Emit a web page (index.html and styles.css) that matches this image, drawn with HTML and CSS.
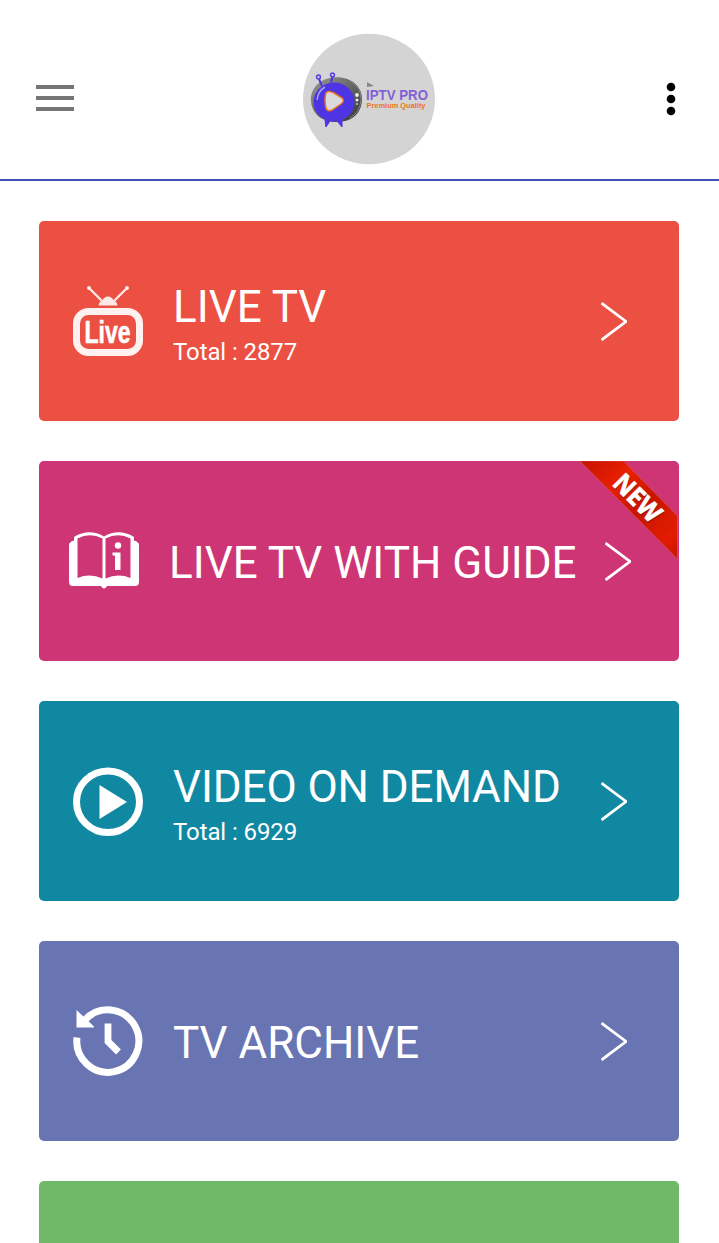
FILE: index.html
```
<!DOCTYPE html>
<html lang="en">
<head>
    <meta charset="UTF-8">
    <meta name="viewport" content="width=device-width, initial-scale=1.0">
    <title>IPTV PRO</title>
    <link rel="stylesheet" href="styles.css">
</head>
<body>
    <header class="header">
        <svg class="menu-icon" viewBox="0 0 38 26">
            <path d="M0 2h38M0 13h38M0 24h38" stroke="#757575" stroke-width="4"/>
        </svg>
        <svg class="logo" viewBox="302 32 134 134">
            <defs>
                <linearGradient id="shell" x1="0" y1="0" x2="1" y2="1">
                    <stop offset="0" stop-color="#999"/>
                    <stop offset="0.5" stop-color="#666"/>
                    <stop offset="1" stop-color="#333"/>
                </linearGradient>
            </defs>
            <ellipse cx="369" cy="99" rx="66" ry="65.3" fill="#d4d4d4"/>
            <path d="M311 101C310 90 319 78 334 77.500C349 76 362 85 362 99C362 113 352 122 337 122C322 122 312 114 311 101Z" fill="url(#shell)"/>
            <path d="M350 81Q362 88 361 100Q360 112 350 118" fill="none" stroke="#888" stroke-width="1"/>
            <path d="M322 86L319 79M331 82L332.500 77" stroke="#4d35e3" stroke-width="2"/>
            <g fill="none" stroke="#5a3fe0" stroke-width="1.500">
                <circle cx="318.500" cy="77" r="1.900"/>
                <circle cx="332.500" cy="75" r="1.900"/>
            </g>
            <path d="M325 120L330 121L326 127ZM337 121L342 120L342 127Z" fill="#4d35e3" stroke="#4d35e3"/>
            <ellipse cx="334" cy="102" rx="20.500" ry="19.500" fill="#4d35e3"/>
            <path d="M317 100Q318 91 325 87" fill="none" stroke="#a99df5" stroke-width="1.500"/>
            <path d="M326 93Q328 90 334 93L342 98Q345 101 341 104L332 110Q327 112 326 108Q324 100 326 93Z" fill="#dcd9dc" stroke="#ee7421" stroke-width="1.500"/>
            <circle cx="357" cy="95" r="1.900" fill="#eee"/>
            <circle cx="357" cy="100" r="1.500" fill="#eee"/>
            <circle cx="357" cy="104" r="1" fill="#ccc"/>
            <path d="M367 82L374 86L367 87Z" fill="#888"/>
            <text class="logo-name" x="366" y="99.500" textLength="62" lengthAdjust="spacingAndGlyphs">IPTV PRO</text>
            <text class="logo-tag" x="366.500" y="107.500" textLength="59" lengthAdjust="spacingAndGlyphs">Premium Quality</text>
        </svg>
        <svg class="more-icon" viewBox="0 0 12 34">
            <circle cx="6" cy="5" r="4.300"/>
            <circle cx="6" cy="17" r="4.300"/>
            <circle cx="6" cy="29" r="4.300"/>
        </svg>
    </header>

    <main class="cards">
        <a class="card card-live">
            <svg class="card-icon" viewBox="0 0 70 70">
                <path d="M16 2L29 15M54 2L41 15" stroke="#ffe9e7" stroke-width="2.400"/>
                <circle cx="16" cy="2" r="2" fill="#ffe9e7"/>
                <circle cx="54" cy="2" r="2" fill="#ffe9e7"/>
                <path d="M25.500 19.500Q26 15.500 29 15Q31 10.500 35 10.500Q39 10.500 41 15Q44 15.500 44.500 19.500Z" fill="#ffe9e7"/>
                <rect x="3.500" y="25.500" width="63" height="41" rx="12" fill="none" stroke="#fff1f0" stroke-width="7"/>
                <text class="live-text" x="11.500" y="57" textLength="46" lengthAdjust="spacingAndGlyphs">Live</text>
            </svg>
            <div class="card-text">
                <div class="card-title">LIVE TV</div>
                <div class="card-total">Total : 2877</div>
            </div>
            <svg class="arrow" viewBox="0 0 26 40"><path d="M0.500 2L25 20.500L0.500 39"/></svg>
        </a>

        <a class="card card-guide">
            <svg class="card-icon" viewBox="0 0 70 70">
                <path d="M0 19Q0 16 5 14.500L5 11Q20 2 35 10.500Q50 2 65 11L65 14.500Q70 16 70 19V56Q70 60 66 60H38Q35 65 32 60H4Q0 60 0 56Z" fill="#fff"/>
                <path d="M8.500 12.500Q21 6 33.500 12.500V52.500Q21 47 8.500 52ZM36.500 12.500Q49 6 61.500 12.500V52Q49 47 36.500 52.500Z" fill="#ce3575"/>
                <circle cx="49" cy="19.500" r="3.200" fill="#fff"/>
                <path d="M43.500 26.500H51.500V44H46V29.500H43.500Z" fill="#fff"/>
            </svg>
            <div class="card-text">
                <div class="card-title">LIVE TV WITH GUIDE</div>
            </div>
            <svg class="arrow" viewBox="0 0 26 40"><path d="M0.500 2L25 20.500L0.500 39"/></svg>
            <svg class="ribbon" viewBox="0 0 98 98">
                <defs>
                    <linearGradient id="ribbonRed" x1="0" y1="0" x2="1" y2="1">
                        <stop offset="0" stop-color="#c41200"/>
                        <stop offset="0.300" stop-color="#e92000"/>
                        <stop offset="0.550" stop-color="#c81500"/>
                        <stop offset="0.850" stop-color="#e21c00"/>
                        <stop offset="1" stop-color="#c61500"/>
                    </linearGradient>
                </defs>
                <path d="M0 0H43.500L97.500 55V98Z" fill="url(#ribbonRed)" stroke="#d8534f" stroke-width="0.700"/>
                <g transform="translate(57.500 37) rotate(45)">
                    <text class="ribbon-shadow" x="1" y="10" textLength="56" lengthAdjust="spacingAndGlyphs">NEW</text>
                    <text class="ribbon-text" x="0" y="9" textLength="56" lengthAdjust="spacingAndGlyphs">NEW</text>
                </g>
            </svg>
        </a>

        <a class="card card-vod">
            <svg class="card-icon" viewBox="0 0 70 70">
                <ellipse cx="35" cy="35.700" rx="31.500" ry="30.800" fill="none" stroke="#fff" stroke-width="7"/>
                <path d="M26.500 19V53L54 36Z" fill="#fff"/>
            </svg>
            <div class="card-text">
                <div class="card-title title-vod">VIDEO ON DEMAND</div>
                <div class="card-total">Total : 6929</div>
            </div>
            <svg class="arrow" viewBox="0 0 26 40"><path d="M0.500 2L25 20.500L0.500 39"/></svg>
        </a>

        <a class="card card-archive">
            <svg class="card-icon" viewBox="0 0 70 70">
                <path d="M11.500 14.500A31 31.200 0 1 1 4 31.500" fill="none" stroke="#fff" stroke-width="7"/>
                <path d="M3.500 4L21 20.500V21.500H3.500Z" fill="#fff"/>
                <path d="M35 17.500V35.500L45.500 46" fill="none" stroke="#fff" stroke-width="6.800"/>
            </svg>
            <div class="card-text">
                <div class="card-title">TV ARCHIVE</div>
            </div>
            <svg class="arrow" viewBox="0 0 26 40"><path d="M0.500 2L25 20.500L0.500 39"/></svg>
        </a>

        <a class="card card-green"></a>
    </main>
</body>
</html>
```
FILE: styles.css
```
* {
    box-sizing: border-box;
}
body {
    margin: 0;
    background-color: #fff;
    font-family: Roboto, sans-serif;
}
.header {
    display: flex;
    align-items: center;
    justify-content: space-between;
    height: 181px;
    padding: 18px 42px 0 36px;
    border-bottom: 2px solid #3f51b5;
}
.menu-icon {
    width: 38px;
    height: 26px;
    margin-bottom: 2px;
}
.logo {
    width: 134px;
    height: 134px;
    margin-right: 2px;
}
.logo-name {
    font: bold 15.5px "Liberation Sans", sans-serif;
    fill: #8460d6;
}
.logo-tag {
    font: bold 8px "Liberation Sans", sans-serif;
    fill: #ee7421;
}
.more-icon {
    width: 12px;
    height: 34px;
}
.cards {
    display: flex;
    flex-direction: column;
    gap: 40px;
    padding: 40px 40px 0 39px;
}
.card {
    position: relative;
    display: flex;
    align-items: center;
    height: 200px;
    padding: 0 52px 0 34px;
    border-radius: 5px;
    color: #fff;
}
.card-live {
    background-color: #eb5042;
}
.card-guide {
    padding: 0 48px 0 30px;
    background-color: #ce3575;
}
.card-vod {
    background-color: #1188a2;
}
.card-archive {
    background-color: #6974b2;
}
.card-green {
    height: 62px;
    border-radius: 5px 5px 0 0;
    background-color: #70b968;
}
.card-icon {
    flex: none;
    width: 70px;
    height: 70px;
    overflow: visible;
}
.card-text {
    flex: 1;
    margin-left: 30px;
    white-space: nowrap;
}
.card-title {
    font-size: 44px;
    line-height: 52px;
    padding-top: 4px;
}
.title-vod {
    letter-spacing: -0.1px;
}
.card-total {
    font-size: 24px;
    line-height: 28px;
    padding-top: 5px;
    margin-bottom: -1px;
    letter-spacing: -0.1px;
}
.arrow {
    flex: none;
    width: 26px;
    height: 40px;
    fill: none;
    stroke: #fff;
    stroke-width: 2.8px;
}
.live-text {
    font: bold 31px "Liberation Sans", sans-serif;
    fill: #fff;
    stroke: #fff;
    stroke-width: 0.6px;
}
.ribbon {
    position: absolute;
    top: 0;
    right: 1px;
    width: 98px;
    height: 98px;
}
.ribbon-text,
.ribbon-shadow {
    font: bold 26px "Open Sans", sans-serif;
    fill: #fff;
    stroke: #fff;
    stroke-width: 0.7px;
    text-anchor: middle;
}
.ribbon-shadow {
    fill: #8d1000;
    stroke: none;
}
```
